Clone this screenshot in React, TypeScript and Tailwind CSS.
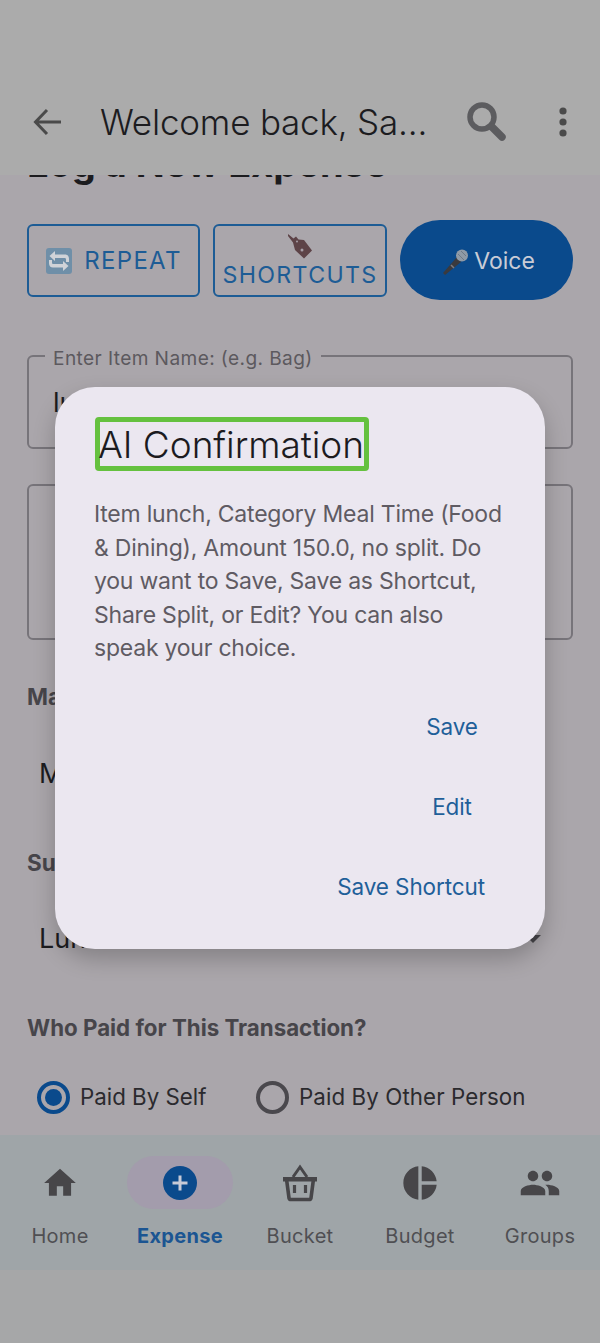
import React from "react";

const font = { fontFamily: "Inter, 'Noto Sans', sans-serif" };

function RepeatIcon() {
  return (
    <svg width="28" height="28" viewBox="0 0 28 28" aria-hidden="true">
      <rect x="1" y="1" width="26" height="26" rx="3" fill="#6f8fa8" />
      <path d="M10 4 4.500 9 10 14v-3h9.500c1 0 1.500.5 1.500 1.500V15h3v-3.200C24 9 22.400 7.500 20 7.500H10z" fill="#d0d3d8" />
      <path d="M18 24l5.500-5L18 14v3H8.500C7.500 17 7 16.500 7 15.500V13H4v3.200C4 19 5.600 20.500 8 20.500h10z" fill="#d0d3d8" />
    </svg>
  );
}

function TagIcon() {
  return (
    <svg width="26" height="28" viewBox="0 0 26 28" aria-hidden="true">
      <path d="M1 1 6.500 5.500 9 3.500l2.500 3 5.500.5 8 10.500-8 8L8 17 6 9.500 1 3z" fill="#5d4347" />
      <circle cx="15" cy="17" r="1.500" fill="#a69ea6" />
      <circle cx="10" cy="8.500" r="1" fill="#a69ea6" />
    </svg>
  );
}

function MicIcon() {
  return (
    <svg width="26" height="28" viewBox="0 0 26 28" aria-hidden="true">
      <path d="M15 9 1 25l2 2L19 14z" fill="#3a3a3e" />
      <path d="M9 17l3 3" stroke="#7a7a80" strokeWidth="1.500" />
      <circle cx="20" cy="7.500" r="6" fill="#8f9aa6" />
      <path d="M16 6l6 6M19 3l5 5" stroke="#6f7a86" strokeWidth="1" />
    </svg>
  );
}

function Radio({ on }: { on?: boolean }) {
  return on ? (
    <span className="flex h-[33px] w-[33px] shrink-0 items-center justify-center rounded-full border-[4px] border-[#0a4a8c]">
      <span className="h-[17px] w-[17px] rounded-full bg-[#0a4a8c]" />
    </span>
  ) : (
    <span className="h-[33px] w-[33px] shrink-0 rounded-full border-[4px] border-[#4a484d]" />
  );
}

function NavItem({ label, active, children }: { label: string; active?: boolean; children: React.ReactNode }) {
  return (
    <div className="flex w-[120px] flex-col items-center">
      <div className={`flex h-[53px] w-[106px] items-center justify-center rounded-full ${active ? "bg-[#a39cac]" : ""}`}>
        {children}
      </div>
      <span className={`mt-[14px] text-[20px] leading-[26px] tracking-[0.3px] ${active ? "font-bold text-[#1b5592]" : "text-[#4f4f53]"}`}>
        {label}
      </span>
    </div>
  );
}

function Action({ children }: { children: React.ReactNode }) {
  return (
    <button className="flex h-[80px] min-w-[106px] items-center justify-center px-5 text-[22.500px] tracking-[-0.1px] text-[#1f5f99]">
      {children}
    </button>
  );
}

export default function App() {
  return (
    <div style={font} className="relative flex h-[1343px] w-[600px] flex-col overflow-hidden bg-[#aaa6ab]">
      <header className="relative z-10 flex h-[175px] shrink-0 items-center bg-[#ababab] pl-[28px] pr-[24px] pt-[70px] pb-[1px]">
        <svg width="38" height="38" viewBox="0 0 38 38" fill="none" stroke="#4a4a4a" strokeWidth="3" aria-hidden="true">
          <path d="M33 19H8M19 7 7.500 19 19 31" />
        </svg>
        <h1 className="ml-[34px] w-[359px] shrink-0 whitespace-nowrap text-[35px] font-light tracking-[-0.2px] text-[#1c1c1f]">Welcome back, Sa...</h1>
        <svg className="ml-[6px] shrink-0" width="44" height="44" viewBox="0 0 44 44" fill="none" aria-hidden="true">
          <circle cx="17" cy="17" r="12" stroke="#5c5c5f" strokeWidth="5.500" />
          <path d="M27 27l10 10" stroke="#5c5c5f" strokeWidth="7.500" strokeLinecap="round" />
        </svg>
        <svg className="ml-[49px] shrink-0" width="10" height="30" viewBox="0 0 10 30" fill="#4a4a4a" aria-hidden="true">
          <circle cx="5" cy="4" r="3.600" />
          <circle cx="5" cy="15" r="3.600" />
          <circle cx="5" cy="26" r="3.600" />
        </svg>
      </header>

      <main className="flex-1 px-[27px]">
        <h2 className="-mt-[34px] whitespace-nowrap text-[38px] font-bold leading-[44px] text-[#1c1c1f]">Log a New Expense</h2>

        <div className="mt-[35px] flex items-center gap-[13px]">
          <button className="flex h-[73px] w-[173px] items-center justify-center gap-[11px] rounded-[6px] border-2 border-[#1d5c95] pt-[2px] text-[24px] tracking-[1.300px] text-[#1d5c95]">
            <RepeatIcon />
            REPEAT
          </button>
          <button className="flex h-[73px] w-[174px] flex-col items-center justify-center rounded-[6px] border-2 border-[#1d5c95] pt-[1px] text-[23.200px] leading-[28px] tracking-[1.300px] text-[#1d5c95]">
            <TagIcon />
            SHORTCUTS
          </button>
          <button className="flex h-[80px] w-[173px] items-center justify-center gap-[6px] rounded-full bg-[#0a4a8c] pl-[4px] pt-[3px] text-[23px] text-[#c9ccd6]">
            <MicIcon />
            Voice
          </button>
        </div>

        <fieldset className="mt-[42px] h-[107px] rounded-[6px] border-2 border-[#77747a] px-[16px] pb-[20px]">
          <legend className="px-[8px] pt-[4px] text-[19.100px] leading-[24px] tracking-[0.4px] text-[#5c595e]">Enter Item Name: (e.g. Bag)</legend>
          <div className="pl-[8px] pt-[16px] text-[27px] leading-[34px] text-[#1c1c1f]">lunch</div>
        </fieldset>

        <div className="mt-[35px] h-[156px] rounded-[6px] border-2 border-[#77747a]" />

        <p className="mt-[43px] text-[22.500px] font-bold leading-[28px] text-[#47454a]">Main Category</p>
        <p className="mt-[46px] pl-[12px] text-[27px] leading-[34px] text-[#1c1c1f]">Meal Time</p>
        <p className="mt-[58px] text-[22.500px] font-bold leading-[28px] text-[#47454a]">Sub Category</p>
        <div className="mt-[45px] flex items-center justify-between pl-[12px] pr-[32px]">
          <span className="text-[27px] leading-[34px] text-[#1c1c1f]">Lunch</span>
          <span className="h-0 w-0 border-x-[8px] border-t-[8px] border-x-transparent border-t-[#47454a]" />
        </div>

        <p className="mt-[58px] whitespace-nowrap text-[22.300px] font-bold leading-[28px] text-[#47454a]">Who Paid for This Transaction?</p>
        <div className="mt-[38px] flex items-center pl-[10px] text-[22.300px] leading-[34px] text-[#2b2a2e]">
          <Radio on />
          <span className="ml-[10px] w-[176px] shrink-0">Paid By Self</span>
          <Radio />
          <span className="ml-[10px] whitespace-nowrap tracking-[0.1px]">Paid By Other Person</span>
        </div>
      </main>

      <nav className="flex h-[135px] shrink-0 items-start bg-[#9fa5a8] pt-[21px]">
        <NavItem label="Home">
          <svg width="38" height="38" viewBox="0 0 24 24" fill="#474649" aria-hidden="true">
            <path d="M10 20v-6h4v6h5v-8h3L12 3 2 12h3v8z" />
          </svg>
        </NavItem>
        <NavItem label="Expense" active>
          <svg width="34" height="34" viewBox="0 0 34 34" aria-hidden="true">
            <circle cx="17" cy="17" r="17" fill="#0a4a8c" />
            <path d="M17 9.500v15M9.500 17h15" stroke="#c7cad6" strokeWidth="3" />
          </svg>
        </NavItem>
        <NavItem label="Bucket">
          <svg width="36" height="38" viewBox="0 0 36 38" fill="none" aria-hidden="true">
            <path d="M1 13h34v4.500H1z" fill="#474649" />
            <path d="M11 13 18 3l7 10" stroke="#474649" strokeWidth="3" />
            <path d="M4.500 15l2.500 19a2 2 0 0 0 2 1.500h18a2 2 0 0 0 2-1.500l2.500-19" stroke="#474649" strokeWidth="3.600" />
            <path d="M12.500 21v8M23.500 21v8" stroke="#474649" strokeWidth="3.200" />
          </svg>
        </NavItem>
        <NavItem label="Budget">
          <svg width="40" height="40" viewBox="0 0 24 24" fill="#474649" aria-hidden="true">
            <path d="M11 2v20c-5.070-.5-9-4.790-9-10s3.930-9.500 9-10zm2.030 0v8.990H22c-.47-4.740-4.240-8.520-8.970-8.990zm0 11.010V22c4.740-.47 8.500-4.250 8.970-8.990h-8.970z" />
          </svg>
        </NavItem>
        <NavItem label="Groups">
          <svg width="42" height="42" viewBox="0 0 24 24" fill="#474649" aria-hidden="true">
            <path d="M16 11c1.660 0 2.990-1.340 2.990-3S17.660 5 16 5c-1.660 0-3 1.340-3 3s1.340 3 3 3zm-8 0c1.660 0 2.990-1.340 2.990-3S9.660 5 8 5C6.340 5 5 6.340 5 8s1.340 3 3 3zm0 2c-2.330 0-7 1.170-7 3.500V19h14v-2.500c0-2.330-4.670-3.500-7-3.500zm8 0c-.29 0-.62.020-.97.050 1.160.84 1.970 1.970 1.970 3.450V19h6v-2.500c0-2.330-4.670-3.500-7-3.500z" />
          </svg>
        </NavItem>
      </nav>
      <div className="h-[73px] shrink-0 bg-[#a6a7a8]" />

      <div className="absolute left-[55px] top-[387px] z-20 flex h-[562px] w-[490px] flex-col rounded-[40px] bg-[#ebe7f0] pl-[40px] pr-[40px] pt-[30px] shadow-[0_10px_22px_rgba(0,0,0,0.22)]">
        <div className="self-start rounded-[4px] border-[5px] border-[#65c13f]">
          <h3 className="-ml-[2px] h-[44px] whitespace-nowrap text-[37px] font-light leading-[46px] tracking-[-0.05px] text-[#1c1b1f]">AI Confirmation</h3>
        </div>
        <p className="mt-[27px] -ml-px text-[23px] leading-[33.500px] tracking-[-0.22px] text-[#5f5b63]">
          Item lunch, Category Meal Time (Food &amp; Dining), Amount 150.0, no split. Do you want to Save, Save as Shortcut, Share Split, or Edit? You can also speak your choice.
        </p>
        <div className="mt-[21px] flex flex-col items-end">
          <Action>Save</Action>
          <Action>Edit</Action>
          <Action>Save Shortcut</Action>
        </div>
      </div>
    </div>
  );
}
